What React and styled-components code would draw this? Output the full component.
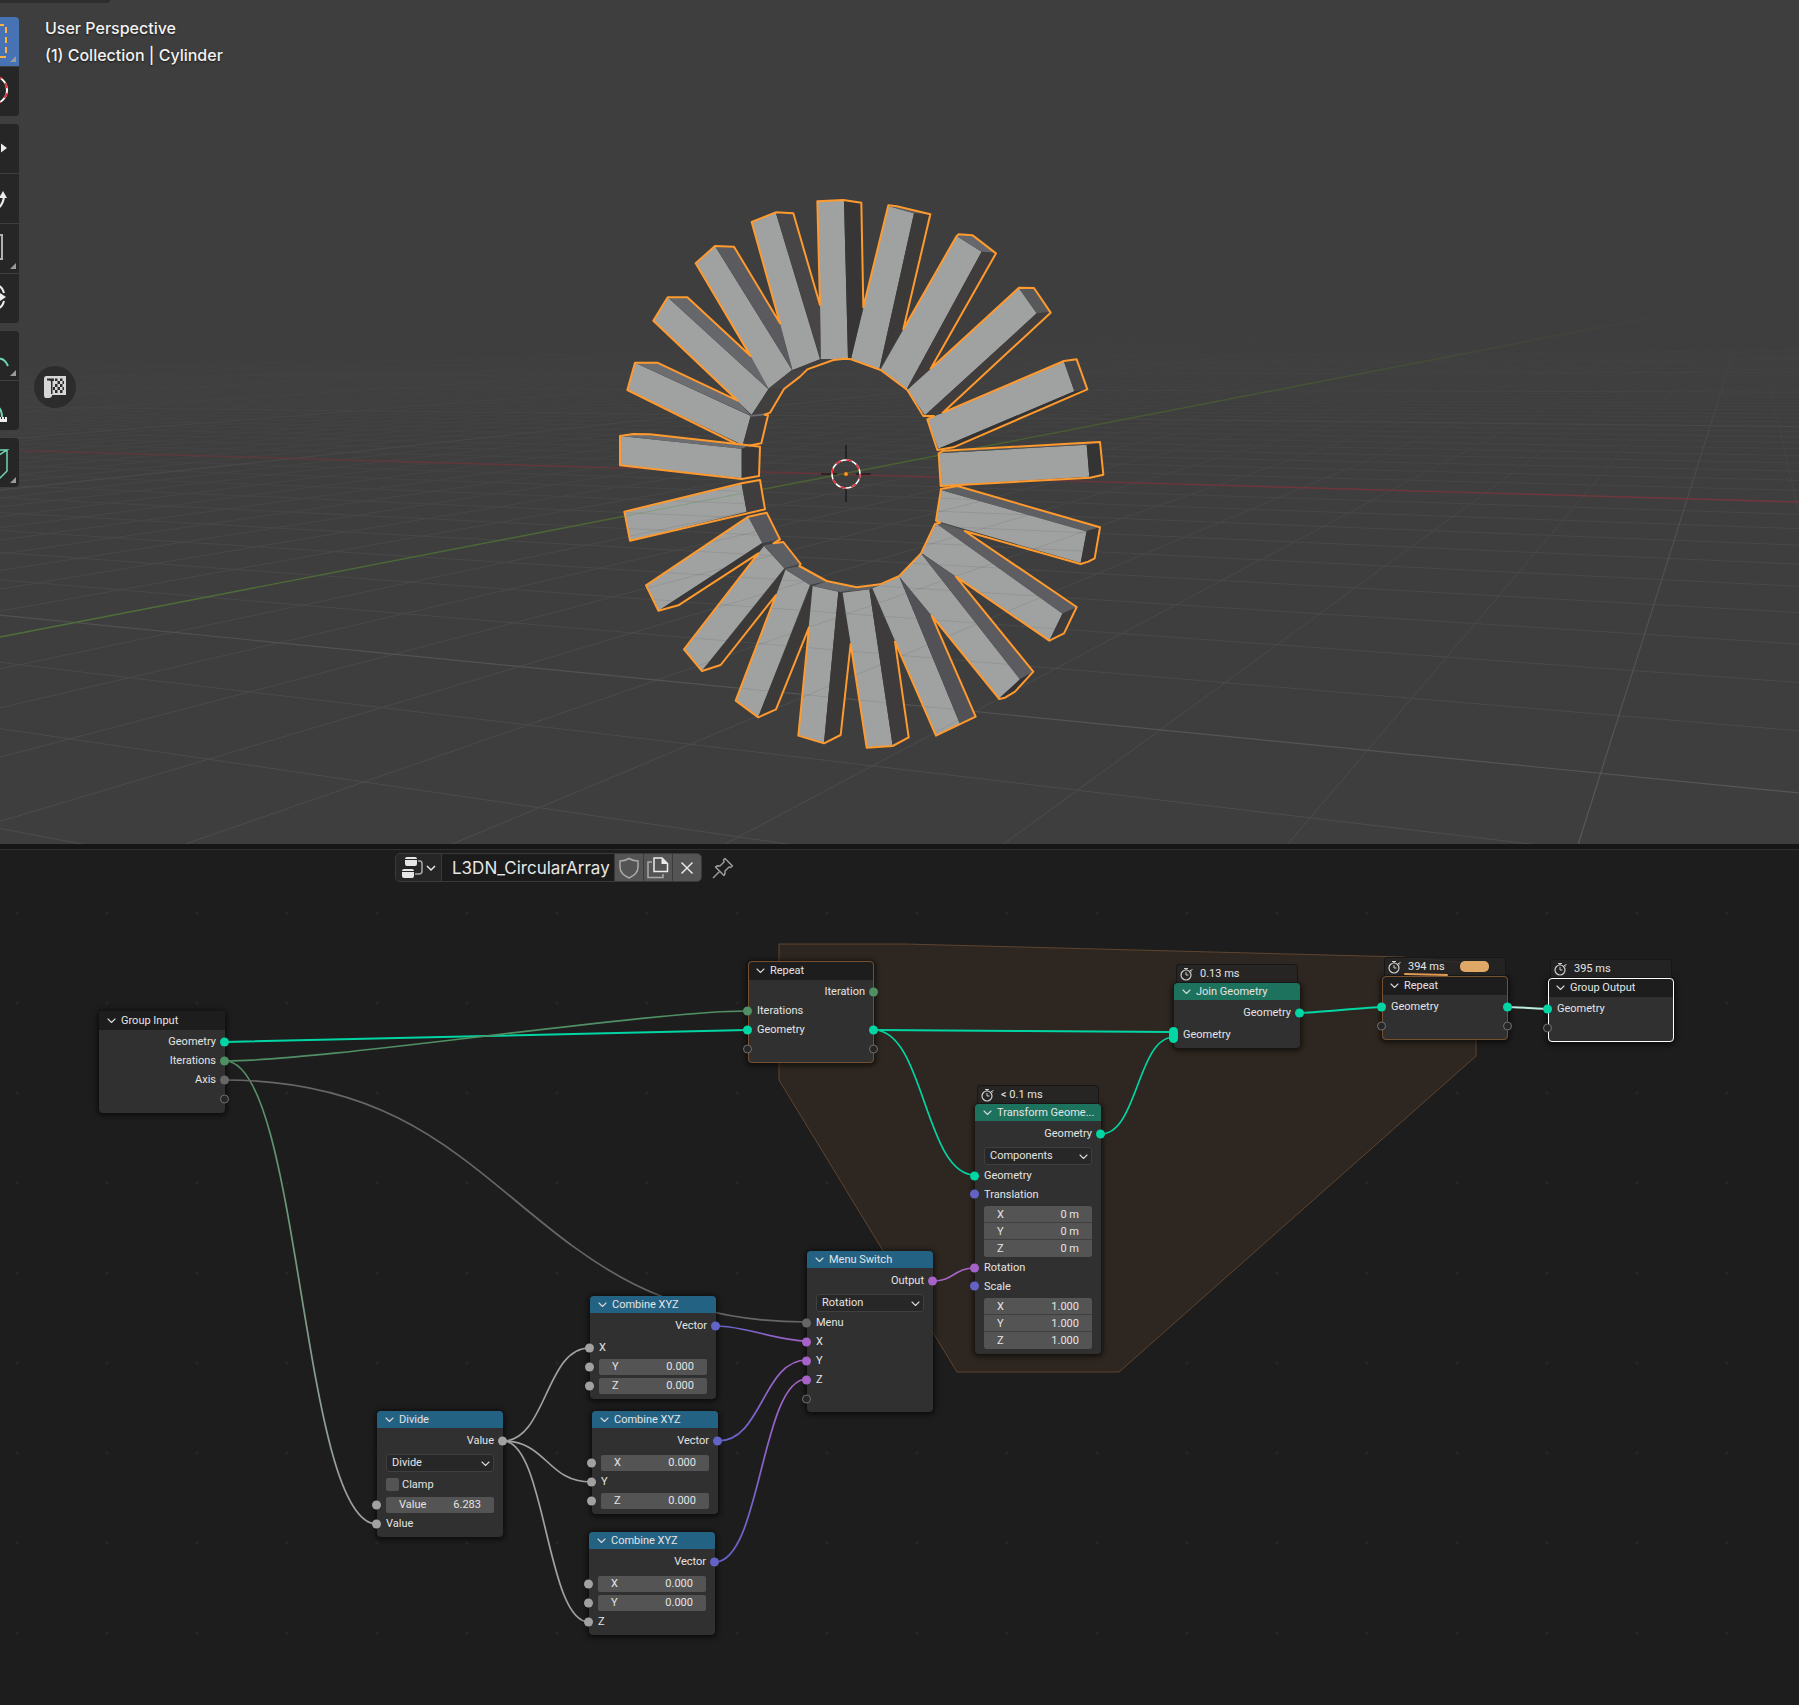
import React, { useState } from "react";
import styled, { createGlobalStyle, css } from "styled-components";

const GlobalStyle = createGlobalStyle`
  * {
    box-sizing: border-box;
  }
  body {
    margin: 0;
    background: #1d1d1d;
    color: #e4e4e4;
    font-family: Inter, "Noto Sans", sans-serif;
  }
  button,
  input,
  select {
    margin: 0;
    padding: 0;
    border: 0;
    background: none;
    color: inherit;
    font: inherit;
  }
`;

const Page = styled.div`
  display: flex;
  flex-direction: column;
  min-height: 100vh;
`;

/* ---------- 3D viewport ---------- */

const Viewport = styled.section`
  position: relative;
  aspect-ratio: 1799 / 844;
  overflow: hidden;
  background: #3e3e3e;
`;

const Scene = styled.svg`
  display: block;
  width: 100%;
  height: 100%;
`;

const HeaderEdge = styled.div`
  position: absolute;
  top: 0;
  left: 0;
  width: 110px;
  height: 3px;
  border-bottom-right-radius: 3px;
  background: #2d2d2d;
`;

const ViewInfo = styled.div`
  position: absolute;
  top: 15px;
  left: 45px;
  font-size: 16px;
  font-weight: 500;
  line-height: 27px;
  color: #f2f2f2;
  text-shadow: 0 1px 2px rgba(0, 0, 0, 0.6);
`;

const ToolShelf = styled.nav`
  position: absolute;
  top: 17px;
  left: -29px;
  display: flex;
  flex-direction: column;
  gap: 8px;
`;

const ToolGroup = styled.div`
  display: flex;
  flex-direction: column;
  gap: 1px;
  overflow: hidden;
  border-radius: 4px;
`;

const Tool = styled.button`
  width: 48px;
  height: 49px;
  background: ${props => (props.$active ? "#4772b3" : "#262626")};

  svg {
    display: block;
  }
`;

const AssetButton = styled.button`
  position: absolute;
  top: 366px;
  left: 34px;
  display: flex;
  align-items: center;
  justify-content: center;
  width: 42px;
  height: 42px;
  border-radius: 50%;
  background: #2c2c2c;
`;

/* ---------- node editor ---------- */

const Editor = styled.section`
  display: flex;
  flex: 1;
  flex-direction: column;
  border-top: 5px solid #161616;
`;

const EditorBar = styled.header`
  display: flex;
  align-items: center;
  gap: 10px;
  height: 41px;
  padding: 0 0 5px 395px;
  border-top: 1px solid #303030;
`;

const DataBlock = styled.div`
  display: flex;
  gap: 1px;
  overflow: hidden;
  height: 29px;
  border: 1px solid #3a3a3a;
  border-radius: 5px;
  background: #3a3a3a;
`;

const BarButton = styled.button`
  display: flex;
  align-items: center;
  justify-content: center;
  width: ${props => (props.$wide ? "45px" : "28px")};
  background: ${props => (props.$wide ? "#262626" : "#545454")};
`;

const PinButton = styled.button`
  display: flex;
`;

const NameInput = styled.input`
  width: 172px;
  padding-left: 10px;
  background: #1b1b1b;
  font-size: 17px;
  color: #e6e6e6;
`;

const Canvas = styled.div`
  position: relative;
  flex: 1;
  min-height: 770px;
  overflow: hidden;
  background-color: #1d1d1d;
  background-image: radial-gradient(circle, #262626 1px, transparent 2px);
  background-position: 62px 68px;
  background-size: 90px 90px;
`;

const Wires = styled.svg`
  position: absolute;
  top: 0;
  left: 0;
  overflow: visible;
`;

const NodeBox = styled.article`
  position: absolute;
  top: ${props => props.$y}px;
  left: ${props => props.$x}px;
  width: 126px;
  border-radius: 4px;
  background: #303030;
  box-shadow: 0 1px 5px 2px rgba(0, 0, 0, 0.55);
  font-family: Roboto, Inter, sans-serif;
  font-size: 11px;
  line-height: 19px;

  ${props =>
    props.$outline &&
    css`
      outline: ${props.$outline};
      outline-offset: -1px;
    `}
`;

const headerColors = {
  dark: "#1d1d1d",
  geometry: "#1d725e",
  converter: "#246283"
};

const NodeHeader = styled.h2`
  display: flex;
  align-items: center;
  gap: 5px;
  height: ${props => (props.$tone === "dark" ? "19px" : "17px")};
  margin: 0;
  padding-left: 8px;
  border-radius: 4px 4px 0 0;
  background: ${props => headerColors[props.$tone]};
  font-size: 11px;
  font-weight: 400;
  line-height: 16px;
  white-space: nowrap;
`;

const Collapse = styled.button`
  display: flex;
`;

const NodeBody = styled.div`
  padding: ${props => (props.$tone === "dark" ? "2px 0 5px" : "3px 0 4px")};
`;

const Row = styled.div`
  position: relative;
  display: flex;
  align-items: center;
  justify-content: ${props => (props.$out ? "flex-end" : "flex-start")};
  height: ${props => props.$h || 19}px;
  margin-bottom: ${props => (props.$gap ? "3px" : "0")};
  padding: 0 9px;
`;

const Socket = styled.i`
  position: absolute;
  top: 50%;
  ${props => (props.$right ? "right: -4px;" : "left: -5px;")}
  width: 9px;
  height: ${props => (props.$multi ? "16px" : "9px")};
  border-radius: 5px;
  border: ${props => (props.$color ? "0" : "1px solid #707070")};
  background: ${props => props.$color || "#262626"};
  transform: translateY(-50%);
`;

const Field = styled.label`
  display: flex;
  flex: 1;
  align-items: center;
  width: 108px;
  height: 16px;
  padding: 0 13px;
  border-radius: 2px;
  background: #545454;

  input {
    flex: 1;
    width: 20px;
    min-width: 0;
    text-align: right;
  }
`;

const VectorFields = styled.div`
  display: flex;
  flex-direction: column;
  gap: 1px;
  overflow: hidden;
  margin: 3px 9px 1px;
  border-radius: 3px;
  background: #3f3f3f;

  label {
    flex: none;
    width: auto;
    border-radius: 0;
  }
  label:last-child {
    height: 17px;
  }
`;

const Dropdown = styled.span`
  display: flex;
  flex: 1;
  align-items: center;
  height: 18px;
  padding-right: 3px;
  border: 1px solid #3f3f3f;
  border-radius: 3px;
  background: #272727;

  select {
    flex: 1;
    min-width: 0;
    padding-left: 5px;
    appearance: none;
    line-height: 16px;
  }
`;

const CheckLabel = styled.label`
  display: flex;
  align-items: center;
  gap: 3px;

  input {
    width: 13px;
    height: 13px;
    appearance: none;
    border-radius: 2px;
    background: #545454;
  }
`;

const Timing = styled.div`
  position: absolute;
  bottom: 100%;
  left: 2px;
  right: 2px;
  display: flex;
  align-items: center;
  gap: 7px;
  height: 19px;
  padding-left: 3px;
  border: 1px solid #171717;
  border-radius: 3px 3px 0 0;
  background: rgba(38, 38, 38, 0.8);
`;

const Marker = styled.svg`
  position: absolute;
  top: 0;
  left: 0;
`;

const GREEN = "#00d6a3";
const INT = "#4f8f63";
const GREY = "#a1a1a1";
const MENU = "#666666";
const VECTOR = "#6363c7";
const ROTATION = "#a663c7";

/* ---------- scene drawing ---------- */

// Floor grid in perspective: every line runs to one of two vanishing points.
const leftVanish = { x: -2370, y: 381 };
const rightVanish = { x: 1750, y: 300 };

const range = (from, to) =>
  Array.from({ length: to - from + 1 }, (_, i) => from + i);

const xLine = j => {
  const y0 = 334.6 + 1 / (0.0086968 - 0.00051324 * j);
  const slope = (y0 - leftVanish.y) / -leftVanish.x;
  return `M0 ${y0.toFixed(1)}L1800 ${(y0 + slope * 1800).toFixed(1)}`;
};

const yLine = k => {
  const x1 = -25768 + 1 / (4.0493e-5 - 3.925e-7 * k);
  return `M${rightVanish.x} ${rightVanish.y}L${x1.toFixed(1)} 844`;
};

const minor = n => n % 10 !== 0;
const major = n => n % 10 === 0 && n !== 0;
const xRange = range(-50, 15);
const yRange = range(-60, 40);
const minorGrid =
  xRange.filter(minor).map(xLine).join("") +
  yRange.filter(minor).map(yLine).join("");
const majorGrid =
  xRange.filter(major).map(xLine).join("") +
  yRange.filter(major).map(yLine).join("");

const upperFronts = [
  "60,768 425,806 425,895 60,856",
  "82,630 105,548 452,708 428,795",
  "160,422 203,352 505,628 455,704",
  "287,250 345,198 576,570 505,626",
  "455,126 527,97 660,538 577,570",
  "652,64 732,62 744,536 662,538 660,375",
  "865,78 942,100 838,567 753,537",
  "1070,168 1145,215 920,628 842,568",
  "1257,325 1310,400 975,706 922,630",
  "1392,545 1423,634 1015,806 982,718",
  "1016,820 1460,794 1468,890 1022,917"
];

const lowerFronts = [
  "1023,930 1460,1053 1442,1148 1008,1022",
  "1008,1030 1388,1300 1348,1382 963,1118",
  "963,1120 1260,1498 1198,1555 898,1190",
  "898,1190 1080,1632 1008,1667 817,1225",
  "808,1228 878,1697 800,1702 728,1238",
  "638,1218 715,1235 672,1688 595,1667",
  "555,1168 630,1215 475,1610 407,1562",
  "492,1098 553,1165 306,1472 252,1408",
  "445,1010 487,1088 175,1292 138,1216",
  "425,912 440,995 90,1082 73,995"
];

const sides = [
  ["60,768 100,763 150,763 445,797 425,806", "#6c6d70"],
  ["425,806 480,800 478,888 425,895", "#383636"],
  ["105,548 172,548 413,664 455,708", "#6c6d70"],
  ["452,708 503,704 484,790 428,797", "#3e3c3c"],
  ["455,702 510,696 503,706 452,710", "#6c6d70"],
  ["203,352 262,352 452,528 508,630", "#66676b"],
  ["505,628 552,625 510,698 455,705", "#413e3e"],
  ["345,198 402,200 540,430 578,572", "#5a5a5f"],
  ["505,626 576,570 622,568 552,625", "#454344"],
  ["527,97 580,100 660,375 662,540", "#474545"],
  ["576,572 660,538 744,536 700,541 622,568", "#403e3f"],
  ["732,62 784,68 790,380 753,537 744,536", "#373536"],
  ["865,78 890,79 990,103 942,100", "#5b5c60"],
  ["942,100 990,103 910,445 838,568", "#3c3939"],
  ["1070,168 1078,163 1118,166 1188,218 1145,215", "#66676b"],
  ["1145,215 1188,220 992,566 920,628", "#3f3c3b"],
  ["1257,325 1302,324 1350,397 1310,400", "#58585b"],
  ["1310,400 1350,397 1028,700 975,706", "#403d3c"],
  ["1392,545 1430,538 1462,628 1423,634", "#454547"],
  ["1423,634 1462,628 1060,804 1015,806", "#333232"],
  ["1460,794 1500,788 1508,883 1468,890", "#353434"],
  ["1016,820 1030,814 1500,788 1460,794", "#545456"],
  ["1023,930 1072,918 1500,1042 1460,1055", "#5e5f63"],
  ["1460,1053 1500,1042 1482,1138 1442,1150", "#383637"],
  ["1008,1030 1020,1028 1100,1052 1430,1282 1388,1302", "#5d5d62"],
  ["1388,1300 1430,1282 1390,1362 1348,1382", "#3c3a3b"],
  ["963,1120 1068,1190 1300,1475 1260,1498", "#5b5b60"],
  ["1260,1498 1300,1475 1245,1535 1198,1555", "#333233"],
  ["898,1190 995,1307 1126,1610 1080,1632", "#525155"],
  ["808,1228 885,1388 926,1672 878,1697", "#3d3b3c"],
  ["722,1235 752,1395 722,1665 672,1688 715,1235", "#3b3838"],
  ["635,1215 625,1340 528,1588 475,1610", "#3c3a39"],
  ["558,1165 528,1245 362,1455 306,1472", "#3c3a39"],
  ["490,1088 475,1120 235,1276 175,1292", "#383636"],
  ["425,912 480,900 495,988 440,995", "#3f3d3e"],
  ["445,1010 500,998 540,1078 487,1090", "#58585c"],
  ["492,1096 550,1086 602,1152 553,1165", "#5d5e62"],
  ["555,1166 605,1157 680,1203 630,1215", "#626367"],
  ["638,1218 682,1203 770,1222 722,1236", "#68696c"],
  ["722,1236 770,1222 840,1214 808,1228", "#606164"]
];

const outlines = [
  "M60 768L100 762 150 763 445 796 480 800 477 888 425 897 60 856Z",
  "M410 792L82 630 105 548 172 548 413 662 160 422 203 352 262 352 452 528 287 250 345 198 402 200 540 430 455 126 527 97 580 100 660 375 652 64 730 60 784 68 790 382 865 76 890 79 991 103 910 448 1070 168 1076 163 1118 166 1188 220 992 566 1257 323 1302 324 1352 398 1028 698 1392 543 1430 538 1462 628 1060 802 1012 810 982 718 1002 708 970 708 922 630 842 570 753 538 735 536 700 540 622 568 600 590 552 627 510 698 494 704 504 706 484 790 445 797",
  "M1016 820L1030 812 1500 786 1510 884 1470 893 1022 918Z",
  "M73 995L425 910 480 900 495 988 90 1082Z",
  "M138 1216L445 1010 500 998 540 1078 520 1090 550 1086 602 1152 598 1158 680 1203 770 1222 840 1213 898 1188 963 1120 1005 1032 1020 1028 1008 1022 1023 927 1072 918 1500 1042 1484 1135 1465 1145 1442 1152 1094 1053 1430 1281 1392 1360 1348 1382 1068 1190 1300 1475 1245 1535 1215 1553 1198 1557 995 1307 1127 1610 1008 1667 885 1385 926 1672 878 1698 800 1703 752 1392 722 1665 672 1690 595 1667 627 1342 528 1588 475 1612 407 1562 528 1245 362 1455 306 1473 252 1408 475 1120 235 1276 175 1292Z"
];

const Polygons = ({ list }) =>
  list.map(points => <polygon key={points} points={points} />);

const SceneDrawing = () => (
  <Scene viewBox="0 0 1799 844" preserveAspectRatio="xMidYMid slice">
    <defs>
      <linearGradient
        id="fade"
        gradientUnits="userSpaceOnUse"
        x1="900"
        y1="325"
        x2="908"
        y2="844"
      >
        <stop offset="0" stopColor="#000" />
        <stop offset="0.12" stopColor="#333" />
        <stop offset="0.4" stopColor="#aaa" />
        <stop offset="1" stopColor="#fff" />
      </linearGradient>
      <mask id="distance" maskUnits="userSpaceOnUse" x="0" y="0" width="1800" height="844">
        <rect width="1800" height="844" fill="url(#fade)" />
      </mask>
      <linearGradient id="axisY" gradientUnits="userSpaceOnUse" x1="0" y1="0" x2="1700" y2="0">
        <stop offset="0" stopColor="#4f7038" />
        <stop offset="0.6" stopColor="#48602f" />
        <stop offset="1" stopColor="#48602f" stopOpacity="0" />
      </linearGradient>
      <linearGradient id="axisX" gradientUnits="userSpaceOnUse" x1="0" y1="0" x2="1799" y2="0">
        <stop offset="0" stopColor="#6b343b" stopOpacity="0.6" />
        <stop offset="0.5" stopColor="#6b343b" />
        <stop offset="1" stopColor="#73363e" />
      </linearGradient>
      <clipPath id="lowerArms">
        <Polygons list={lowerFronts} />
      </clipPath>
    </defs>
    <g mask="url(#distance)" fill="none">
      <path d={minorGrid} stroke="#4d4d4d" />
      <path d={majorGrid} stroke="#585858" strokeWidth="1.2" />
    </g>
    <path d="M0 450L1799 502" stroke="url(#axisX)" strokeWidth="1.4" />
    <path d="M0 637L1700 308" stroke="url(#axisY)" strokeWidth="1.4" />
    <svg x="600" y="180" width="520" height="600" viewBox="0 0 1560 1800">
      <g fill="#a0a2a2">
        <Polygons list={upperFronts} />
        <Polygons list={lowerFronts} />
      </g>
      {sides.map(([points, fill]) => (
        <polygon key={points} points={points} fill={fill} />
      ))}
      <g clipPath="url(#lowerArms)">
        <g transform="scale(3) translate(-600 -180)" fill="none">
          <path d={minorGrid + majorGrid} stroke="#000" strokeOpacity="0.08" />
          <path d="M0 637L1700 308" stroke="#6f9a6a" strokeOpacity="0.6" />
        </g>
      </g>
      <g fill="none" stroke="#ff9a2e" strokeWidth="6" strokeLinejoin="round">
        {outlines.map(d => (
          <path key={d} d={d} />
        ))}
      </g>
      <path
        d="M738 795V838M738 922V966M663 882H712M768 882H812"
        stroke="#0b0b0b"
        strokeWidth="3"
      />
      <g fill="none" strokeWidth="4.5">
        <circle cx="738" cy="882" r="42" stroke="#fff" />
        <circle
          cx="738"
          cy="882"
          r="42"
          stroke="#e8252f"
          strokeDasharray="16.5 16.5"
        />
      </g>
      <circle cx="738" cy="882" r="7" fill="#ff9a2e" stroke="#5a3a14" strokeWidth="2" />
    </svg>
  </Scene>
);

const Corner = () => <path d="M45 39V45H39Z" fill="#9a9a9a" />;

const toolGroups = [
  [
    {
      name: "Select Box",
      active: true,
      icon: (
        <>
          <path
            d="M10 8H35V40H10Z"
            fill="none"
            stroke="#ffb03f"
            strokeWidth="2"
            strokeDasharray="6 4"
            strokeDashoffset="3"
          />
          <Corner />
        </>
      )
    },
    {
      name: "Cursor",
      icon: (
        <g fill="none" strokeWidth="2">
          <circle cx="22" cy="23" r="14" stroke="#fff" />
          <circle cx="22" cy="23" r="14" stroke="#d9363e" strokeDasharray="5.5 5.5" strokeDashoffset="-3" />
        </g>
      )
    }
  ],
  [
    {
      name: "Move",
      icon: <path d="M30 19.5V28.5L36 24ZM12 19.5V28.5L6 24Z" fill="#ececec" />
    },
    {
      name: "Rotate",
      icon: (
        <>
          <path d="M28 24H36L32 17Z" fill="#ececec" />
          <path d="M33 23C32 30 29 34 24 36" fill="none" stroke="#ececec" strokeWidth="2" />
        </>
      )
    },
    {
      name: "Scale",
      icon: (
        <>
          <path d="M12 11H31V35H12Z" fill="none" stroke="#b0b0b0" strokeWidth="2" />
          <Corner />
        </>
      )
    },
    {
      name: "Transform",
      icon: (
        <>
          <path d="M29 19V27L35 23Z" fill="#ececec" />
          <path
            d="M26 11C30 12 32 15 33 19M33 27C32 31 30 34 26 35"
            fill="none"
            stroke="#ececec"
            strokeWidth="2"
          />
        </>
      )
    }
  ],
  [
    {
      name: "Annotate",
      icon: (
        <>
          <path d="M22 31C27 26 33 26 37 35" fill="none" stroke="#6fd6b2" strokeWidth="2" />
          <Corner />
        </>
      )
    },
    {
      name: "Measure",
      icon: (
        <>
          <path d="M26 25C29 27 31 31 31 36" fill="none" stroke="#6fd6b2" strokeWidth="2" />
          <path d="M16 41H36V36H34V38H33V36H31V38H30V36H28V38H16Z" fill="#ececec" />
        </>
      )
    }
  ],
  [
    {
      name: "Add Cube",
      icon: (
        <>
          <path
            d="M14 17L20 12H36L28 17ZM28 17V41L36 33V12M14 17V41H28"
            fill="none"
            stroke="#6fd6b2"
            strokeWidth="1.5"
          />
          <Corner />
        </>
      )
    }
  ]
];

const Tools = () => (
  <ToolShelf aria-label="Tools">
    {toolGroups.map(group => (
      <ToolGroup key={group[0].name}>
        {group.map(tool => (
          <Tool key={tool.name} $active={tool.active} aria-label={tool.name}>
            <svg width="48" height="49">{tool.icon}</svg>
          </Tool>
        ))}
      </ToolGroup>
    ))}
  </ToolShelf>
);

const AssetIcon = () => (
  <svg width="22" height="22" viewBox="0 0 22 22">
    <path
      d="M2.500 0H22V19H8V20Q7.500 22 5 22H2Q0 22 0 19V3Q0 0 2.500 0Z"
      fill="#d6d6d6"
    />
    <path
      d="M3 2.500H10V5H8.500V18H7V6Q7 4.500 5 4.500H3ZM11 2.500H13.500V5H11ZM16 2.500H18.500V5H16ZM13.500 5H16V8H13.500ZM18.500 5H20V8H18.500ZM11 8H13.500V11H11ZM16 8H18.500V11H16ZM13.500 11H16V14H13.500ZM18.500 11H20V14H18.500ZM9 11H11V14H9ZM11 14H13.500V17H11ZM16 14H18.500V17H16Z"
      fill="#2c2c2c"
    />
  </svg>
);

const Chevron = ({ size = 9 }) => (
  <svg width={size} height={size} viewBox="0 0 9 9">
    <path
      d="M1 3L4.500 6.500L8 3"
      fill="none"
      stroke="#d8d8d8"
      strokeWidth="1.1"
      strokeLinecap="round"
      strokeLinejoin="round"
    />
  </svg>
);

const TimerIcon = () => (
  <svg width="13" height="14" viewBox="0 0 13 14" fill="none" stroke="#cfcfcf">
    <circle cx="6" cy="8" r="5" strokeWidth="1.200" />
    <path d="M6 8V5M6 8H8.500M4 1.500H8M6 1.500V3M10 3L11.500 4.500M10.500 4L12.500 2" />
  </svg>
);

/* ---------- node parts ---------- */

const Node = ({ title, tone, x, y, outline, time, mark, children }) => (
  <NodeBox $x={x} $y={y} $outline={outline}>
    {time && (
      <Timing>
        <TimerIcon />
        {time}
        {mark && (
          <Marker width="120" height="19">
            <rect x="75" y="3" width="29" height="11" rx="5" fill="#dfa866" />
            <path d="M20 16L62 17" stroke="#e09a52" strokeWidth="2" strokeLinecap="round" />
          </Marker>
        )}
      </Timing>
    )}
    <NodeHeader $tone={tone}>
      <Collapse aria-label={`Collapse ${title}`}>
        <Chevron />
      </Collapse>
      {title}
    </NodeHeader>
    <NodeBody $tone={tone}>{children}</NodeBody>
  </NodeBox>
);

const Out = ({ color, gap, children }) => (
  <Row $out $gap={gap}>
    {children}
    <Socket $right $color={color} />
  </Row>
);

const In = ({ color, h, multi, children }) => (
  <Row $h={h}>
    <Socket $color={color} $multi={multi} />
    {children}
  </Row>
);

const NumberField = ({ label, value }) => (
  <Field>
    {label}
    <input defaultValue={value} />
  </Field>
);

const Vector3 = ({ value }) => (
  <VectorFields>
    {["X", "Y", "Z"].map(axis => (
      <NumberField key={axis} label={axis} value={value} />
    ))}
  </VectorFields>
);

const Select = ({ label, value }) => (
  <Row $h={20}>
    <Dropdown>
      <select aria-label={label} defaultValue={value}>
        <option>{value}</option>
      </select>
      <Chevron />
    </Dropdown>
  </Row>
);

// linked is the axis that takes its value from a wire, so it has no field
const CombineXYZ = ({ x, y, linked }) => (
  <Node title="Combine XYZ" tone="converter" x={x} y={y}>
    <Out color={VECTOR} gap>
      Vector
    </Out>
    {["X", "Y", "Z"].map(axis => (
      <In key={axis} color={GREY}>
        {axis === linked ? axis : <NumberField label={axis} value="0.000" />}
      </In>
    ))}
  </Node>
);

const wires = [
  { from: [225, 152], to: [747, 140], a: GREEN, width: 2 },
  { from: [225, 171], to: [747, 121], a: INT },
  { from: [225, 171], to: [377, 634], a: INT, b: GREY },
  { from: [225, 190], to: [807, 432], a: MENU },
  { from: [874, 140], to: [1174, 142], a: GREEN, width: 2 },
  { from: [874, 140], to: [975, 285], a: GREEN },
  { from: [1101, 244], to: [1174, 147], a: GREEN },
  { from: [1300, 123], to: [1382, 117], a: GREEN, width: 2 },
  { from: [1508, 117], to: [1549, 119], a: "#bdebe0", width: 2 },
  { from: [933, 391], to: [975, 378], a: ROTATION },
  { from: [716, 436], to: [807, 451], a: VECTOR, b: ROTATION },
  { from: [718, 551], to: [807, 470], a: VECTOR, b: ROTATION },
  { from: [715, 672], to: [807, 489], a: VECTOR, b: ROTATION },
  { from: [503, 551], to: [589, 458], a: GREY },
  { from: [503, 551], to: [591, 592], a: GREY },
  { from: [503, 551], to: [589, 732], a: GREY }
];

// the flatter the wire, the shorter its handles
const wirePath = ([x1, y1], [x2, y2]) => {
  const dx = x2 - x1;
  const slope = Math.abs((y2 - y1) / dx);
  const handle = dx * 0.5 * Math.min(1, slope * 4);
  return `M${x1} ${y1}C${x1 + handle} ${y1} ${x2 - handle} ${y2} ${x2} ${y2}`;
};

const WireLayer = () => (
  <Wires width="100%" height="100%">
    <path
      d="M779 54H905L1403 67L1476 74V166L1119 482H957L779 190Z"
      fill="#2e2620"
      stroke="#5f4530"
    />
    {wires.map(({ from, to, a, b = a, width = 1.7 }, i) => (
      <g key={i}>
        <linearGradient
          id={`wire${i}`}
          gradientUnits="userSpaceOnUse"
          x1={from[0]}
          y1={from[1]}
          x2={to[0]}
          y2={to[1]}
        >
          <stop offset="0" stopColor={a} />
          <stop offset="1" stopColor={b} />
        </linearGradient>
        <path
          d={wirePath(from, to)}
          fill="none"
          stroke={`url(#wire${i})`}
          strokeWidth={width}
        />
      </g>
    ))}
  </Wires>
);

const EditorHeader = () => {
  const [name, setName] = useState("L3DN_CircularArray");
  return (
    <EditorBar>
      <DataBlock>
        <BarButton $wide aria-label="Browse node groups">
          <svg width="36" height="24" viewBox="0 0 36 24">
            <g fill="#e6e6e6">
              <path d="M6 1H14Q16 1 16 3H4Q4 1 6 1ZM4 4H16V8Q16 10 14 10H6Q4 10 4 8Z" />
              <path d="M3 13H11Q13 13 13 15H1Q1 13 3 13ZM1 16H13V20Q13 22 11 22H3Q1 22 1 20Z" />
            </g>
            <path
              d="M17 5H19Q21 5 21 8V15Q21 18 18 18H14"
              fill="none"
              stroke="#a8a8a8"
              strokeWidth="1.500"
            />
            <path
              d="M26 10L30 14L34 10"
              fill="none"
              stroke="#e6e6e6"
              strokeWidth="1.500"
            />
          </svg>
        </BarButton>
        <NameInput
          aria-label="Node group name"
          value={name}
          onChange={e => setName(e.target.value)}
        />
        <BarButton aria-label="Fake user">
          <svg width="22" height="22" viewBox="0 0 22 22" fill="none" stroke="#a8a8a8" strokeWidth="1.500">
            <path d="M11 1.500Q15 4 20 4V10Q20 17 11 21Q2 17 2 10V4Q7 4 11 1.500Z" />
          </svg>
        </BarButton>
        <BarButton aria-label="Duplicate">
          <svg width="22" height="22" viewBox="0 0 22 22" fill="none" strokeWidth="1.500">
            <path d="M5 5H1V20.500H16V17" stroke="#a8a8a8" />
            <path d="M7 1H15L20.500 6.500V14.500H7Z" stroke="#ececec" />
            <path d="M14.500 1V7H20.500Z" fill="#ececec" />
          </svg>
        </BarButton>
        <BarButton aria-label="Unlink">
          <svg width="14" height="14" viewBox="0 0 14 14" stroke="#e6e6e6" strokeWidth="1.500">
            <path d="M1.500 1.500L12.500 12.500M12.500 1.500L1.500 12.500" />
          </svg>
        </BarButton>
      </DataBlock>
      <PinButton aria-label="Pin">
        <svg width="22" height="22" viewBox="0 0 22 22" fill="none" stroke="#9a9a9a" strokeWidth="1.500">
          <path
            d="M13 1.500L20.500 9L18.500 10.500L17 10L13 14Q13.500 17 12 18.500L3.500 10Q5 8.500 8 9L12 5L11.500 3ZM7.500 14.500L1 21"
            strokeLinejoin="round"
          />
        </svg>
      </PinButton>
    </EditorBar>
  );
};

const NodeTree = () => (
  <Canvas>
    <WireLayer />
    <Node title="Group Input" tone="dark" x={99} y={121}>
      <Out color={GREEN}>Geometry</Out>
      <Out color={INT}>Iterations</Out>
      <Out color={MENU}>Axis</Out>
      <Out />
    </Node>
    <Node title="Repeat" tone="dark" x={748} y={71} outline="1px solid #76502f">
      <Out color={INT}>Iteration</Out>
      <In color={INT}>Iterations</In>
      <Row>
        <Socket $color={GREEN} />
        Geometry
        <Socket $right $color={GREEN} />
      </Row>
      <Row>
        <Socket />
        <Socket $right />
      </Row>
    </Node>
    <Node title="Join Geometry" tone="geometry" x={1174} y={93} time="0.13 ms">
      <Out color={GREEN} gap>
        Geometry
      </Out>
      <In color={GREEN} multi>
        Geometry
      </In>
    </Node>
    <Node
      title="Repeat"
      tone="dark"
      x={1382}
      y={86}
      outline="1px solid #76502f"
      time="394 ms"
      mark
    >
      <Row>
        <Socket $color={GREEN} />
        Geometry
        <Socket $right $color={GREEN} />
      </Row>
      <Row>
        <Socket />
        <Socket $right />
      </Row>
    </Node>
    <Node
      title="Group Output"
      tone="dark"
      x={1548}
      y={88}
      outline="1px solid #ffffff"
      time="395 ms"
    >
      <In color={GREEN}>Geometry</In>
      <In />
    </Node>
    <Node
      title="Transform Geome..."
      tone="geometry"
      x={975}
      y={214}
      time="< 0.1 ms"
    >
      <Out color={GREEN} gap>
        Geometry
      </Out>
      <Select label="Mode" value="Components" />
      <In color={GREEN}>Geometry</In>
      <In color={VECTOR} h={18}>
        Translation
      </In>
      <Vector3 value="0 m" />
      <In color={ROTATION}>Rotation</In>
      <In color={VECTOR} h={18}>
        Scale
      </In>
      <Vector3 value="1.000" />
    </Node>
    <Node title="Menu Switch" tone="converter" x={807} y={361}>
      <Out color={ROTATION} gap>
        Output
      </Out>
      <Select label="Data type" value="Rotation" />
      <In color={MENU}>Menu</In>
      <In color={ROTATION}>X</In>
      <In color={ROTATION}>Y</In>
      <In color={ROTATION}>Z</In>
      <In />
    </Node>
    <CombineXYZ x={590} y={406} linked="X" />
    <CombineXYZ x={592} y={521} linked="Y" />
    <CombineXYZ x={589} y={642} linked="Z" />
    <Node title="Divide" tone="converter" x={377} y={521}>
      <Out color={GREY} gap>
        Value
      </Out>
      <Select label="Operation" value="Divide" />
      <Row $h={22}>
        <CheckLabel>
          <input type="checkbox" />
          Clamp
        </CheckLabel>
      </Row>
      <In color={GREY}>
        <NumberField label="Value" value="6.283" />
      </In>
      <In color={GREY}>Value</In>
    </Node>
  </Canvas>
);

const App = () => (
  <>
    <GlobalStyle />
    <Page>
      <Viewport>
        <SceneDrawing />
        <HeaderEdge />
        <Tools />
        <ViewInfo>
          User Perspective
          <br />
          (1) Collection | Cylinder
        </ViewInfo>
        <AssetButton aria-label="Asset shelf">
          <AssetIcon />
        </AssetButton>
      </Viewport>
      <Editor>
        <EditorHeader />
        <NodeTree />
      </Editor>
    </Page>
  </>
);

export default App;
